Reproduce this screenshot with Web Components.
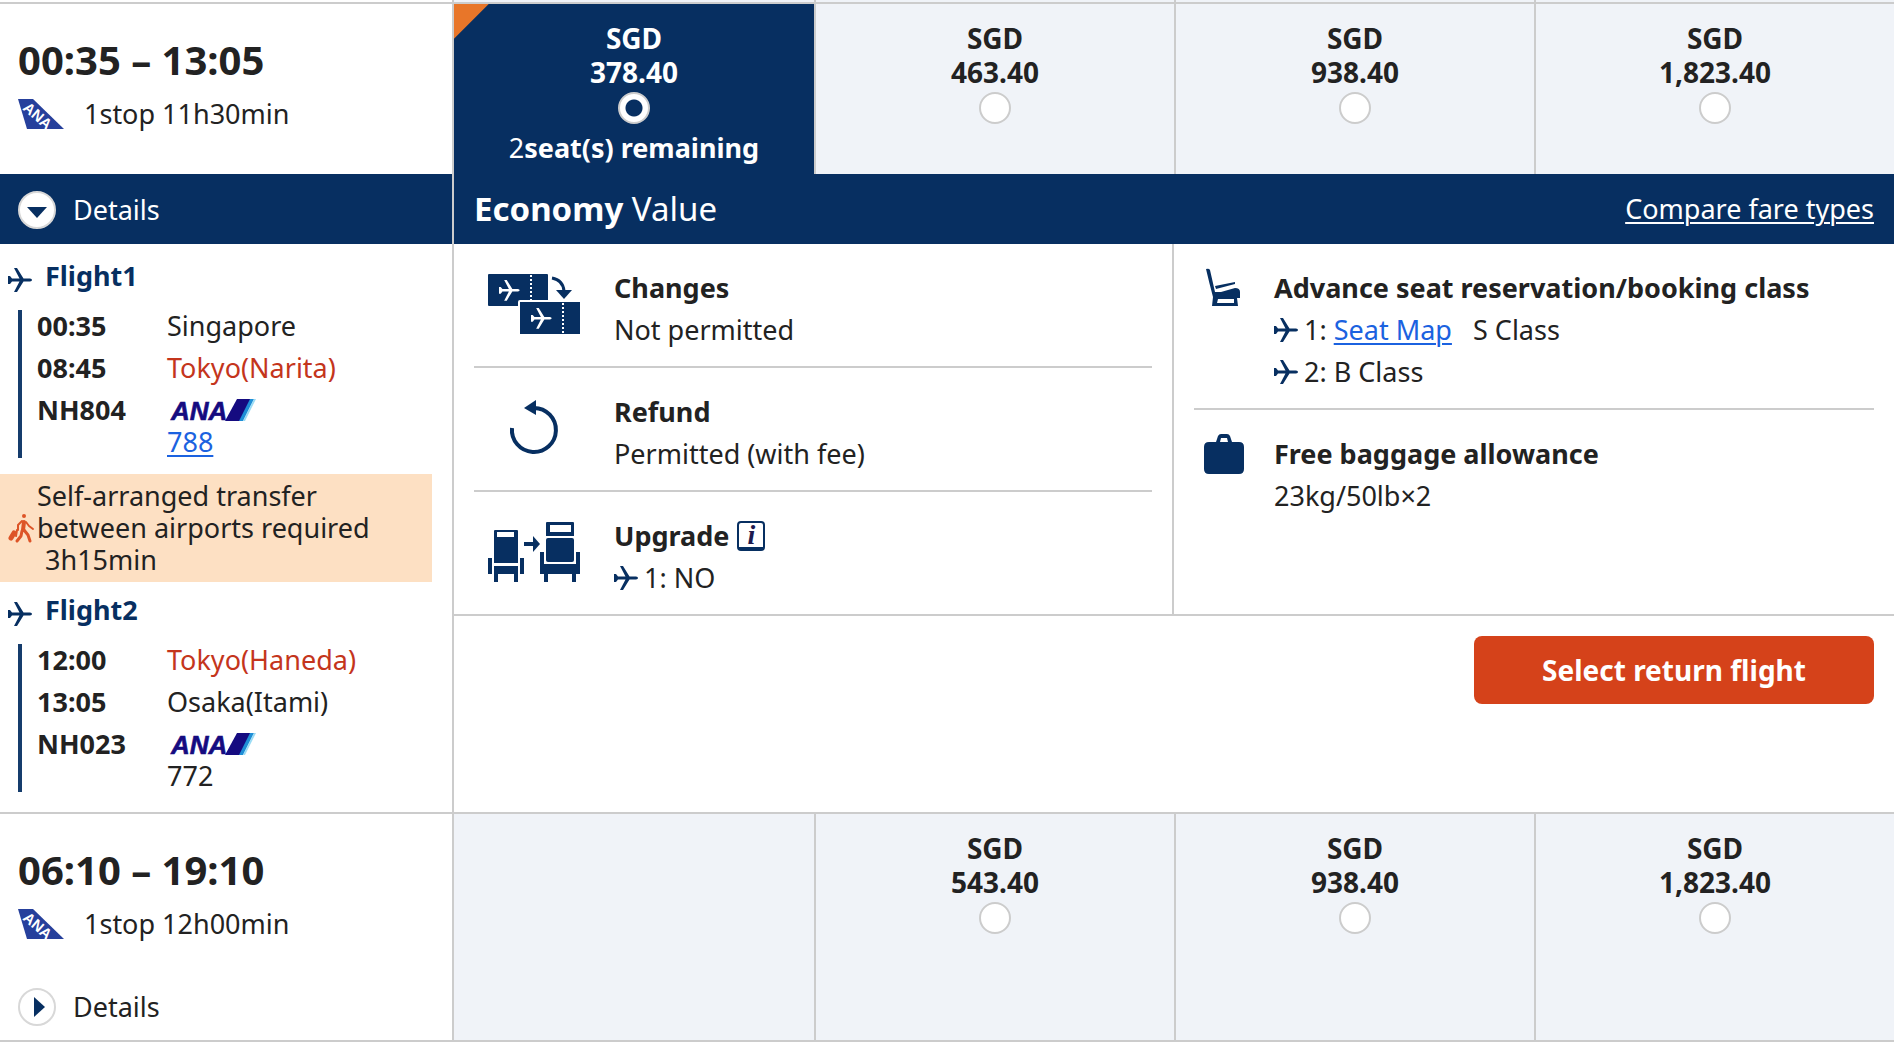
<!DOCTYPE html>
<html lang="en">
<head>
<meta charset="utf-8">
<meta name="viewport" content="width=device-width, initial-scale=1">
<title>Select outbound flight</title>
<style>
  :root {
    --navy: #072f61;
    --line: #cccccc;
    --cell: #f0f3f8;
    --text: #222222;
    --alert: #c4351c;
    --link: #1b62e0;
  }

  body {
    margin: 0;
    background: #fff;
    color: var(--text);
    font: 27px/32px "Noto Sans", "Open Sans", sans-serif;
  }

  /* only the lower edge of the row above is on screen */
  .previous {
    height: 4px;
    overflow: hidden;
  }

  a {
    color: var(--link);
    text-decoration-thickness: 2px;
    text-underline-offset: 3px;
  }
</style>
</head>
<body>

<main>
  <flight-row class="previous" aria-hidden="true">
    <fare-cell slot="fares"></fare-cell>
    <fare-cell slot="fares"></fare-cell>
    <fare-cell slot="fares"></fare-cell>
    <fare-cell slot="fares"></fare-cell>
  </flight-row>

  <flight-row open>
    <flight-summary slot="summary" times="00:35 – 13:05">1stop 11h30min</flight-summary>
    <fare-cell slot="fares" currency="SGD" amount="378.40" seats="2" selected></fare-cell>
    <fare-cell slot="fares" currency="SGD" amount="463.40"></fare-cell>
    <fare-cell slot="fares" currency="SGD" amount="938.40"></fare-cell>
    <fare-cell slot="fares" currency="SGD" amount="1,823.40"></fare-cell>

    <details-toggle slot="side" open>Details</details-toggle>
    <flight-leg slot="side" name="Flight1" depart="00:35" arrive="08:45" number="NH804">
      <span slot="from">Singapore</span>
      <span slot="to" style="color: var(--alert)">Tokyo(Narita)</span>
      <a slot="aircraft" href="#788">788</a>
    </flight-leg>
    <transfer-note slot="side" time="3h15min">Self-arranged transfer between airports required</transfer-note>
    <flight-leg slot="side" name="Flight2" depart="12:00" arrive="13:05" number="NH023">
      <span slot="from" style="color: var(--alert)">Tokyo(Haneda)</span>
      <span slot="to">Osaka(Itami)</span>
      <span slot="aircraft">772</span>
    </flight-leg>

    <fare-panel slot="panel" cabin="Economy" fare="Value">
      <fare-rule slot="rules" icon="tickets" heading="Changes">Not permitted</fare-rule>
      <fare-rule slot="rules" icon="refund" heading="Refund">Permitted (with fee)</fare-rule>
      <fare-rule slot="rules" icon="upgrade" heading="Upgrade" info>
        <rule-leg number="1">NO</rule-leg>
      </fare-rule>
      <fare-rule slot="extras" icon="seat" heading="Advance seat reservation/booking class">
        <rule-leg number="1"><a href="#seatmap">Seat Map</a> &nbsp; S Class</rule-leg>
        <rule-leg number="2">B Class</rule-leg>
      </fare-rule>
      <fare-rule slot="extras" icon="bag" heading="Free baggage allowance">23kg/50lb×2</fare-rule>
    </fare-panel>
  </flight-row>

  <flight-row>
    <flight-summary slot="summary" times="06:10 – 19:10">1stop 12h00min</flight-summary>
    <fare-cell slot="fares"></fare-cell>
    <fare-cell slot="fares" currency="SGD" amount="543.40"></fare-cell>
    <fare-cell slot="fares" currency="SGD" amount="938.40"></fare-cell>
    <fare-cell slot="fares" currency="SGD" amount="1,823.40"></fare-cell>
    <details-toggle slot="side">Details</details-toggle>
  </flight-row>
</main>

<script>
const PLANE = 'M0 8h2l2 2.5h7.500L6 0h3l6.500 10.500H22q2 .3 2 1.500t-2 1.500h-6.500L9 24H6l5.500-10.500H4L2 16H0z';

const ICONS = {
  plane: { box: [24, 24], art: `<path fill="currentColor" d="${PLANE}"/>` },

  tail: { box: [46, 30], art: `
    <path fill="#26409c" d="M0 0h15l31 30H9z"/>
    <text fill="#fff" font-family="Liberation Sans, sans-serif" font-weight="700" font-size="15"
      transform="translate(4 10) rotate(41)">ANA</text>` },

  ana: { box: [86, 22], art: `
    <text x="1" y="21" fill="#150b80" stroke="#150b80" stroke-width=".6" font-family="Liberation Sans, sans-serif" font-weight="700" font-style="italic" font-size="26">ANA</text>
    <path fill="#150b80" d="M67 0h14L70 22H55z"/>
    <path fill="#1f8fd6" d="M80 0h4L73 22h-4z"/>
    <path fill="#9adcf5" d="M84 0h2L75 22h-2z"/>` },

  walker: { box: [26, 28], art: `
    <g fill="none" stroke="#dd5427" stroke-linecap="round" stroke-linejoin="round">
      <circle cx="16" cy="2" r="2" fill="#dd5427" stroke="none"/>
      <path stroke-width="4" d="M16 8l-1 8"/>
      <path stroke-width="2" d="M14 7l-4 4v5M18 8l3 4 4 3"/>
      <path stroke-width="3" d="M14 17l-1 5-4 5M16 16l4 5 2 6"/>
      <path stroke-width="5" d="M6 19l-3 5"/>
      <path stroke-width="2" d="M9 16l-1 6"/>
    </g>` },

  tickets: { box: [92, 62], art: `
    <rect width="60" height="32" rx="1" fill="currentColor"/>
    <path stroke="#fff" stroke-width="2" stroke-dasharray="2 2" d="M43 1v31"/>
    <path fill="#fff" transform="translate(11 6) scale(.86)" d="${PLANE}"/>
    <rect x="31" y="27" width="62" height="34" rx="1" fill="currentColor" stroke="#fff" stroke-width="2"/>
    <path stroke="#fff" stroke-width="2" stroke-dasharray="2 2" d="M75 29v31"/>
    <path fill="#fff" transform="translate(43 34) scale(.86)" d="${PLANE}"/>
    <path fill="none" stroke="currentColor" stroke-width="3" d="M64 4q11 2 12 13"/>
    <path fill="currentColor" d="M68 16h16l-8 9z"/>` },

  refund: { box: [92, 62], art: `
    <path fill="none" stroke="currentColor" stroke-width="4" d="M24 30a22 22 0 1 0 22-20"/>
    <path fill="currentColor" d="M36 10l12-8v15z"/>` },

  upgrade: { box: [92, 62], art: `
    <g fill="currentColor" fill-rule="evenodd">
      <path d="M7 8h22q1 0 1 1v32H6V9q0-1 1-1zM9 10v5h17v-5z"/>
      <path d="M6 44h24v16h-4v-8H10v8H6zM0 36h4v16H0zM32 36h4v16h-4z"/>
      <path d="M36 20h9v-6l7 8-7 8v-6h-9z"/>
      <path d="M59 0h26q1 0 1 1v13H58V1q0-1 1-1zM62 3v7h21V3z"/>
      <rect x="58" y="16" width="28" height="24" rx="2"/>
      <path d="M52 30h4v12h32V30h4v22h-4v8h-4v-8H60v8h-4v-8h-4z"/>
    </g>` },

  seat: { box: [42, 40], art: `
    <g fill="currentColor" fill-rule="evenodd">
      <path d="M3 1q3-1 4 1l5 22h6l14-4q5 0 5 4v6h-3l1 8H9l1-9Q6 14 3 1zM15 31l-1 4h17v-4z"/>
      <path d="M12 18l20-4v2l-19 5z"/>
    </g>` },

  bag: { box: [42, 40], art: `
    <path fill="currentColor" fill-rule="evenodd" d="M13 8l2-6q1-2 3-2h6q2 0 3 2l2 6h7q5 0 5 5v22q0 5-5 5H6q-5 0-5-5V13q0-5 5-5zM17 8h8l-1-4h-6z"/>` }
};

function icon(name) {
  const { box: [w, h], art } = ICONS[name];
  return `<svg width="${w}" height="${h}" viewBox="0 0 ${w} ${h}" overflow="visible" aria-hidden="true">${art}</svg>`;
}

// Small base class: subclasses only return their markup
class PlainElement extends HTMLElement {
  connectedCallback() {
    if (this.shadowRoot) return;
    this.attachShadow({ mode: 'open' });
    this.shadowRoot.innerHTML = this.render();
  }

  attr(name) {
    return this.getAttribute(name) || '';
  }
}

class FlightRow extends PlainElement {
  render() {
    return `
      <style>
        :host {
          display: grid;
          grid-template-columns: 454px 1fr;
          grid-template-rows: auto 1fr;
          box-sizing: border-box;
          border-bottom: 2px solid var(--line);
        }
        .summary, .side { border-right: 2px solid var(--line); }
        .side { grid-area: 2 / 1; }
        .fares {
          grid-area: 1 / 2 / span 2;
          display: grid;
          grid-template-columns: repeat(4, 1fr);
        }
        :host([open]) .fares { grid-area: 1 / 2; }
        .panel { grid-area: 2 / 2; }
        :host(:not([open])) .panel { display: none; }
      </style>
      <div class="summary"><slot name="summary"></slot></div>
      <div class="fares"><slot name="fares"></slot></div>
      <div class="side"><slot name="side"></slot></div>
      <div class="panel"><slot name="panel"></slot></div>
    `;
  }
}

class FlightSummary extends PlainElement {
  render() {
    return `
      <style>
        :host { display: block; padding: 32px 18px 44px; }
        h2 { margin: 0 0 14px; font-size: 40px; line-height: 48px; }
        p { display: flex; align-items: center; gap: 20px; margin: 0; }
      </style>
      <h2>${this.attr('times')}</h2>
      <p>${icon('tail')}<span><slot></slot></span></p>
    `;
  }
}

class FareCell extends PlainElement {
  render() {
    const seats = this.attr('seats');
    return `
      <style>
        :host {
          display: block;
          background: var(--cell);
          border-left: 2px solid var(--line);
          text-align: center;
        }
        :host(:first-of-type) { border-left: 0; }
        :host([selected]) {
          background: linear-gradient(135deg, #e87629 24px, var(--navy) 25px);
          color: #fff;
        }
        label { display: block; padding: 17px 10px 10px; }
        .price { display: block; font-size: 28px; font-weight: 700; line-height: 34px; }
        input {
          appearance: none;
          box-sizing: border-box;
          display: block;
          width: 32px;
          height: 32px;
          margin: 3px auto 8px;
          border: 2px solid var(--line);
          border-radius: 50%;
          background: #fff;
        }
        input:checked { background: radial-gradient(circle, var(--navy) 8px, #fff 9px); }
      </style>
      ${this.attr('amount') && `
        <label>
          <span class="price">${this.attr('currency')}<br>${this.attr('amount')}</span>
          <input type="radio" name="fare" ${this.hasAttribute('selected') ? 'checked' : ''}>
          ${seats && `<span>${seats}<b>seat(s) remaining</b></span>`}
        </label>`}
    `;
  }
}

class DetailsToggle extends PlainElement {
  render() {
    const open = this.hasAttribute('open');
    return `
      <style>
        :host { display: block; }
        button {
          display: flex;
          align-items: center;
          gap: 17px;
          box-sizing: border-box;
          width: 100%;
          height: 56px;
          padding: 0 18px 10px;
          border: 0;
          background: none;
          color: inherit;
          font: inherit;
          cursor: pointer;
        }
        :host([open]) button {
          height: 70px;
          padding: 2px 18px 0;
          background: var(--navy);
          color: #fff;
        }
      </style>
      <button type="button" aria-expanded="${open}">
        <svg width="38" height="38" viewBox="0 0 38 38" aria-hidden="true">
          <circle cx="19" cy="19" r="18" fill="#fff" stroke="#d8d8d8" stroke-width="2"/>
          <path fill="#072f61" d="${open ? 'M9 16h20L19 27z' : 'M16 9v20l11-10z'}"/>
        </svg>
        <slot></slot>
      </button>
    `;
  }

  connectedCallback() {
    super.connectedCallback();
    this.shadowRoot.querySelector('button').addEventListener('click', () => {
      this.dispatchEvent(new CustomEvent('toggle-details', { bubbles: true }));
    });
  }
}

class FlightLeg extends PlainElement {
  render() {
    return `
      <style>
        :host { display: block; padding: 16px 8px; }
        :host(:last-of-type) { padding: 12px 8px 20px; }
        h3 {
          display: flex;
          align-items: center;
          gap: 13px;
          margin: 0 0 18px;
          color: var(--navy);
          font-size: 27px;
        }
        svg { display: block; }
        h3 svg { margin-top: 8px; }
        dl {
          display: grid;
          grid-template-columns: 130px 1fr;
          row-gap: 10px;
          margin: 0 0 0 10px;
          padding-left: 15px;
          border-left: 4px solid #153c6c;
        }
        dt { font-weight: 700; }
        dd { margin: 0; }
        .logo { display: flex; align-items: center; height: 32px; padding-left: 3px; }
      </style>
      <h3>${icon('plane')}${this.attr('name')}</h3>
      <dl>
        <dt>${this.attr('depart')}</dt><dd><slot name="from"></slot></dd>
        <dt>${this.attr('arrive')}</dt><dd><slot name="to"></slot></dd>
        <dt>${this.attr('number')}</dt>
        <dd><span class="logo">${icon('ana')}</span><slot name="aircraft"></slot></dd>
      </dl>
    `;
  }
}

class TransferNote extends PlainElement {
  render() {
    return `
      <style>
        :host {
          display: flex;
          align-items: center;
          gap: 3px;
          margin-right: 20px;
          padding: 6px 40px 6px 8px;
          background: #fde0c3;
        }
        svg { flex: none; }
        p { margin: 0; }
        time { display: block; padding-left: 8px; }
      </style>
      ${icon('walker')}
      <p><slot></slot><time>${this.attr('time')}</time></p>
    `;
  }
}

class FarePanel extends PlainElement {
  render() {
    return `
      <style>
        header {
          display: flex;
          align-items: center;
          justify-content: space-between;
          height: 70px;
          padding: 0 20px;
          background: var(--navy);
          color: #fff;
        }
        h2 { margin: 0; font-size: 33px; font-weight: 400; }
        header a { color: #fff; text-decoration-thickness: 2px; text-underline-offset: 3px; }
        .columns {
          display: grid;
          grid-template-columns: 1fr 1fr;
          border-bottom: 2px solid var(--line);
        }
        .rules, .extras { padding: 0 20px; }
        .rules {
          --icon-column: 120px;
          --icon-top: 7px;
          border-right: 2px solid var(--line);
        }
        .extras {
          --icon-column: 60px;
          --icon-top: 1px;
        }
        footer { display: flex; justify-content: flex-end; padding: 20px; }
        button {
          width: 400px;
          height: 68px;
          border: 0;
          border-radius: 8px;
          background: #d5421a;
          color: #fff;
          font: inherit;
          font-size: 28px;
          font-weight: 700;
          cursor: pointer;
        }
      </style>
      <header>
        <h2><b>${this.attr('cabin')}</b> ${this.attr('fare')}</h2>
        <a href="#fares">Compare fare types</a>
      </header>
      <div class="columns">
        <div class="rules"><slot name="rules"></slot></div>
        <div class="extras"><slot name="extras"></slot></div>
      </div>
      <footer><button type="button">Select return flight</button></footer>
    `;
  }
}

class FareRule extends PlainElement {
  render() {
    // the last rule of each column has no line under it
    const next = this.nextElementSibling;
    const last = !next || next.slot !== this.slot;
    return `
      <style>
        :host {
          display: grid;
          grid-template-columns: var(--icon-column) 1fr;
          column-gap: 20px;
          padding: 23px 0 15px;
          border-bottom: ${last ? '0' : '2px solid var(--line)'};
          line-height: 42px;
        }
        .icon { margin-top: var(--icon-top); color: var(--navy); text-align: center; line-height: 0; }
        h3 { display: flex; align-items: center; gap: 8px; margin: 0; font-size: 27px; }
        .info {
          box-sizing: border-box;
          width: 28px;
          height: 30px;
          padding: 0;
          border: 2px solid var(--navy);
          border-bottom-width: 4px;
          border-radius: 4px;
          background: #fff;
          color: #1d1a4f;
          font: italic 700 28px/22px "Liberation Serif", serif;
        }
      </style>
      <div class="icon">${icon(this.attr('icon'))}</div>
      <div>
        <h3>${this.attr('heading')}${this.hasAttribute('info')
          ? '<button type="button" class="info" aria-label="About upgrades">i</button>' : ''}</h3>
        <slot></slot>
      </div>
    `;
  }
}

class RuleLeg extends PlainElement {
  render() {
    return `
      <style>
        :host { display: flex; align-items: center; gap: 6px; }
        svg { color: var(--navy); }
      </style>
      ${icon('plane')}
      <span>${this.attr('number')}: <slot></slot></span>
    `;
  }
}

customElements.define('flight-row', FlightRow);
customElements.define('flight-summary', FlightSummary);
customElements.define('fare-cell', FareCell);
customElements.define('details-toggle', DetailsToggle);
customElements.define('flight-leg', FlightLeg);
customElements.define('transfer-note', TransferNote);
customElements.define('fare-panel', FarePanel);
customElements.define('fare-rule', FareRule);
customElements.define('rule-leg', RuleLeg);
</script>
</body>
</html>
